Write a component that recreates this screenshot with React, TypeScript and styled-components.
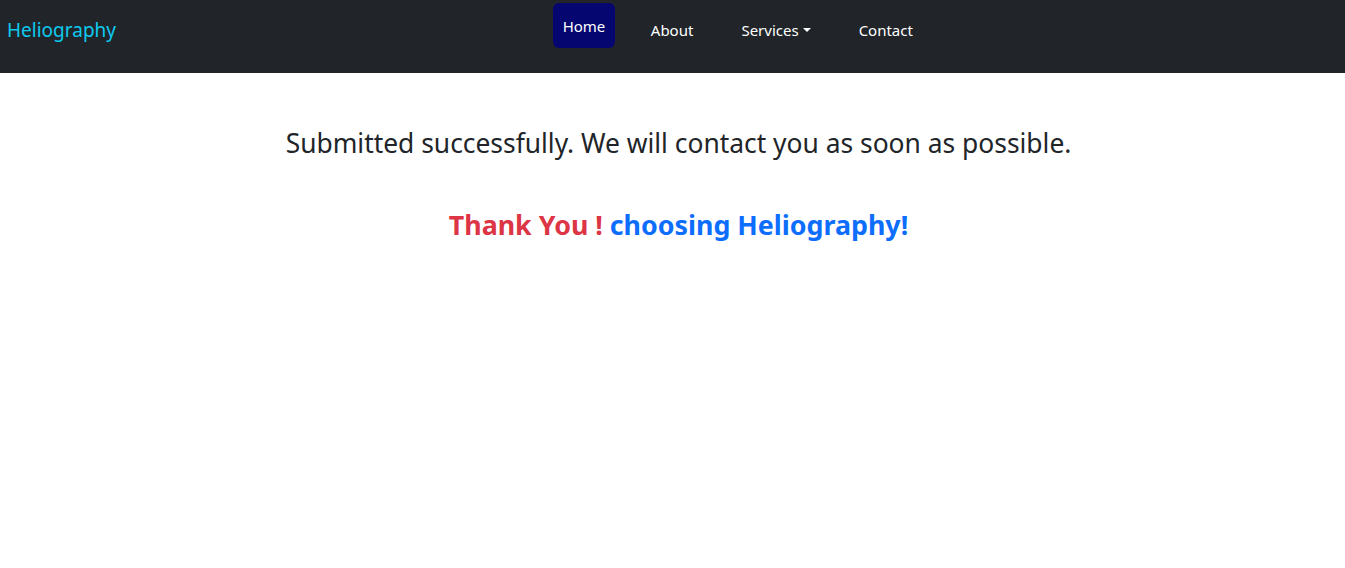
import React from "react";
import styled, { createGlobalStyle } from "styled-components";

const Global = createGlobalStyle`
  * { box-sizing: border-box; }
  body {
    margin: 0;
    font-family: "Noto Sans", "Open Sans", sans-serif;
    background: #fff;
    color: #212529;
  }
`;

const NavBar = styled.nav`
  display: flex;
  align-items: flex-start;
  height: 73px;
  background: #212529;
  padding: 0 7px;
`;

const Brand = styled.a`
  color: #0dcaf0;
  font-size: 19px;
  line-height: 1;
  margin-top: 21px;
  text-decoration: none;
  margin-right: 16px;
`;

const NavList = styled.ul`
  flex: 1;
  display: flex;
  justify-content: center;
  align-items: flex-start;
  list-style: none;
  margin: 0;
  padding: 0 0 0 8px;
  gap: 24px;
`;

const NavLink = styled.a<{ $active?: boolean }>`
  display: flex;
  align-items: center;
  color: #fff;
  font-size: 15px;
  text-decoration: none;
  padding: 0 ${(p) => (p.$active ? "9.5px" : "12px")};
  height: 45px;
  margin-top: ${(p) => (p.$active ? "3px" : "7px")};
  border-radius: 6px;
  background: ${(p) => (p.$active ? "#060670" : "transparent")};
`;

const Caret = styled.span`
  display: inline-block;
  margin-left: 4px;
  border-top: 4px solid #fff;
  border-left: 4px solid transparent;
  border-right: 4px solid transparent;
`;

const Main = styled.main`
  display: flex;
  flex-direction: column;
  align-items: center;
  padding: 50px 0 0 12px;
`;

const Message = styled.p`
  margin: 0;
  font-size: 26.4px;
  line-height: 40px;
  color: #212529;
`;

const Thanks = styled.h3`
  margin: 42px 0 0;
  font-size: 26.8px;
  line-height: 40px;
  font-weight: 700;
`;

const Red = styled.span`
  color: #dc3545;
`;

const Blue = styled.span`
  color: #0d6efd;
`;

export default function App() {
  return (
    <>
      <Global />
      <NavBar>
        <Brand href="#">Heliography</Brand>
        <NavList>
          <li>
            <NavLink href="#" $active>Home</NavLink>
          </li>
          <li>
            <NavLink href="#">About</NavLink>
          </li>
          <li>
            <NavLink href="#">
              Services
              <Caret />
            </NavLink>
          </li>
          <li>
            <NavLink href="#">Contact</NavLink>
          </li>
        </NavList>
      </NavBar>
      <Main>
        <Message>Submitted successfully. We will contact you as soon as possible.</Message>
        <Thanks>
          <Red>Thank You !</Red> <Blue>choosing Heliography!</Blue>
        </Thanks>
      </Main>
    </>
  );
}
